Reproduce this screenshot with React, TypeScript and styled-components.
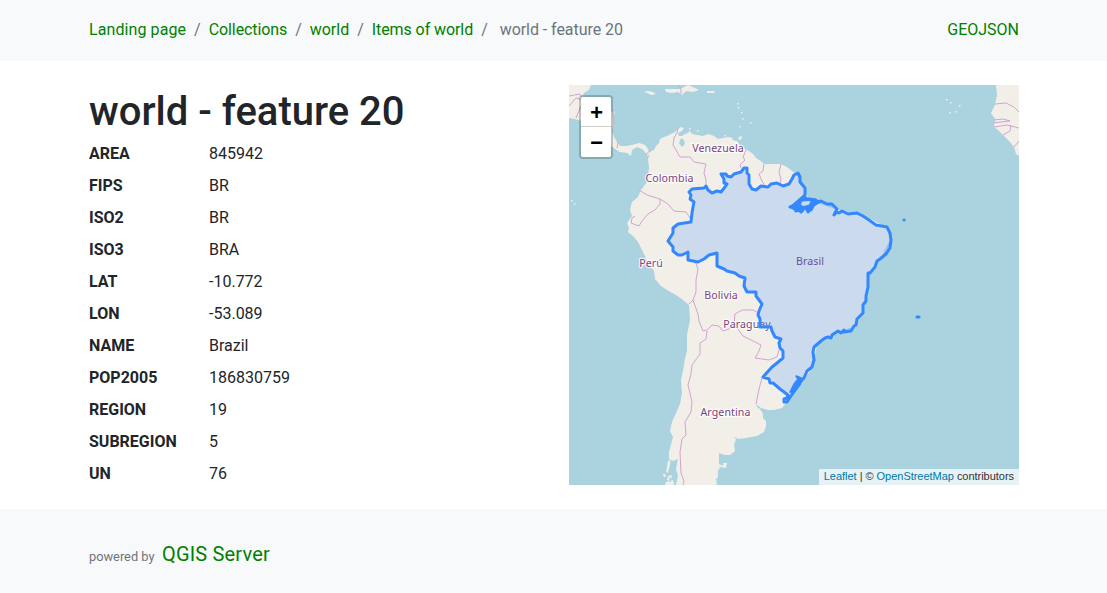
import React from 'react';
import styled, { createGlobalStyle } from 'styled-components';

const GlobalStyle = createGlobalStyle`
  *, *::before, *::after { box-sizing: border-box; }
  body {
    margin: 0;
    font-family: Roboto, "Liberation Sans", sans-serif;
    font-size: 16px;
    line-height: 24px;
    color: #212529;
    background: #fff;
  }
`;

const Page = styled.div`
  display: flex;
  flex-direction: column;
  min-height: 593px;
`;

const Container = styled.div`
  width: 961px;
  margin: 0 auto;
  padding: 0 15px 0 16px;
`;

const Header = styled.nav`
  height: 61px;
  padding-top: 18px;
  background: #f8f9fa;
`;

const HeaderRow = styled(Container)`
  display: flex;
  justify-content: space-between;
`;

const Link = styled.a`
  color: #008000;
  text-decoration: none;
`;

const Breadcrumb = styled.ol`
  display: flex;
  margin: 0;
  padding: 0;
  list-style: none;
`;

const Crumb = styled.li<{ $tracking?: number }>`
  color: #6c757d;
  letter-spacing: ${(p) => p.$tracking ?? 0}px;

  &:not(:first-child)::before {
    content: '/';
    padding: 0 8px;
    letter-spacing: 0;
  }
  &:last-child::before {
    padding-right: 12px;
  }
`;

const Main = styled(Container)`
  display: grid;
  grid-template-columns: 480px 450px;
  height: 448px;
  padding-top: 24px;
`;

const Title = styled.h1`
  margin: 3px 0 2px;
  font-size: 40px;
  line-height: 48px;
  font-weight: 500;
`;

const Attributes = styled.dl`
  display: grid;
  grid-template-columns: 120px 1fr;
  grid-auto-rows: 32px;
  align-items: center;
  margin: 0;
`;

const Name = styled.dt`
  font-weight: 700;
`;

const Value = styled.dd`
  margin: 0;
`;

const MapPane = styled.div`
  position: relative;
  width: 450px;
  height: 400px;
  overflow: hidden;
  background: #aad3df;
`;

const MapDrawing = styled.svg`
  display: block;
`;

const ZoomControl = styled.div`
  position: absolute;
  top: 10px;
  left: 10px;
  border: 2px solid rgba(0, 0, 0, 0.2);
  border-radius: 4px;
  background-clip: padding-box;
`;

const ZoomButton = styled.button`
  display: block;
  width: 30px;
  height: 30px;
  padding: 6px 0 0 1px;
  border: 0;
  background: #fff;
  color: #000;
  font: bold 22px/24px "Liberation Mono", monospace;
  text-align: center;

  &:first-child {
    padding-top: 7px;
    line-height: 22px;
    border-bottom: 1px solid #ccc;
    border-radius: 2px 2px 0 0;
  }
  &:last-child {
    border-radius: 0 0 2px 2px;
  }
`;

const Attribution = styled.div`
  position: absolute;
  right: 0;
  bottom: 0;
  padding: 0 5px 2px;
  background: rgba(255, 255, 255, 0.7);
  color: #333;
  font: 11px/14px "Liberation Sans", Arial, sans-serif;
  letter-spacing: -0.03px;

  a { color: #0078a8; }
`;

const Footer = styled.footer`
  flex: 1;
  padding-top: 30px;
  background: #f8f9fa;
`;

const FooterRow = styled(Container)`
  display: flex;
  align-items: baseline;
  gap: 7.5px;
  line-height: 30px;
`;

const Powered = styled.span`
  font-size: 12.8px;
  color: #6c757d;
`;

const Product = styled(Link)`
  font-size: 20px;
  letter-spacing: 0.17px;
`;

const crumbs: [string, number][] = [
  ['Landing page', 0.09],
  ['Collections', -0.1],
  ['world', -0.02],
  ['Items of world', -0.08],
];

const attributes: [string, string][] = [
  ['AREA', '845942'],
  ['FIPS', 'BR'],
  ['ISO2', 'BR'],
  ['ISO3', 'BRA'],
  ['LAT', '-10.772'],
  ['LON', '-53.089'],
  ['NAME', 'Brazil'],
  ['POP2005', '186830759'],
  ['REGION', '19'],
  ['SUBREGION', '5'],
  ['UN', '76'],
];

const land = [
  // South America
  'M81 68L82 66L85 65L87 61L90 58L91 54L95 52L98 51L102 49L106 47L109 44L112 42L115 43L113 46L109 48L110 51L113 51L116 49L119 48L121 46L123 49L128 50L134 51L139 49L145 51L149 54L154 53L159 52L164 53L163 55L168 56L171 60L174 63L180 66L184 69L187 73L193 77L195 79L205 79L212 79L218 82L223 86L228 90L234 102L240 115L266 124L300 133L318 143L321 155L311 174L299 190L298 215L287 241L268 247L248 260L243 283L230 302L217 318L213 323L205 325L199 325L192 323L187 319L188 322L191 324L194 329L194 333L197 336L197 341L195 347L188 351L177 353L169 354L164 351L167 354L165 360L166 366L161 370L156 370L150 368L150 379L154 381L154 378L158 378L157 383L151 382L149 386L149 392L147 394L148 400L107 400L109 391L107 384L109 374L104 376L100 374L100 367L104 352L101 346L103 337L107 328L111 319L113 308L112 295L114 286L116 274L118 266L118 250L121 235L120 220L114 215L107 210L98 205L92 201L86 194L85 186L79 178L75 169L69 157L65 152L59 147L60 143L58 138L63 131L61 125L63 117L69 112L72 105L78 97L79 90L80 83L79 74Z',
  // Central America
  'M0 0L22 0L20 5L16 7L13 11L20 21L35 24L44 27L46 26L45 31L44 39L43 46L45 52L48 57L51 61L57 61L63 60L70 58L76 60L79 64L81 68L79 71L76 67L73 64L68 62L63 65L62 71L58 68L51 67L46 64L38 58L24 44L10 35L0 33Z',
  // West Africa
  'M427 0L450 0L450 71L447 69L445 62L441 57L434 50L429 45L425 42L426 34L422 28L426 20L428 10Z',
  // Caribbean and Chilean islands
  'M75 7L79 6L84 7L87 9L82 10L78 8Z M96 4L104 4L111 4L119 0L126 3L130 5L124 7L117 6L113 10L109 7L103 8L97 7Z M138 6L146 6L145 8L138 8Z M170 52L173 51L172 55L169 54Z M99 376L102 375L99 388L97 387Z M99 391L103 390L102 396L98 395Z M94 389L96 389L97 392L95 392Z M97 397L104 395L105 400L96 400Z',
];

const lakes =
  'M112 53L115 55L116 59L113 62L110 58Z M102 375L105 378L103 382L101 378Z M100 392L103 394L101 398Z';

const isles = [
  [120, 43], [128, 45], [155, 50], [168, 18], [169, 22], [172, 27], [173, 33], [170, 41],
  [181, 37], [377, 14], [381, 17], [390, 20], [386, 26], [380, 27], [2, 115], [5, 118],
];

const frontiers =
  'M109 43L108 48L105 53L104 60L107 65L111 72L121 72L125 77L137 79L135 88L137 95L137 102' +
  'M70 105L78 110L91 114L99 119L105 126L117 127L121 133M91 114L91 119L86 125L79 129L73 136L70 141L62 138L63 133L66 131' +
  'M177 65L174 72L176 75L171 80L172 83M195 79L194 86L190 89L193 96L196 101M212 79L210 87L212 94L211 99' +
  'M49 57L48 63M81 65L77 70M126 176L129 184L127 195L127 207L124 215L120 219M124 215L129 229L130 236L134 246L138 245L143 240L150 241L154 246L160 244L166 239' +
  'M138 246L137 254L131 258L131 269L123 280L122 289L119 300L123 317L122 327L116 337L117 350L113 354L111 367L112 388L115 396L114 400' +
  'M191 229L184 225L173 225L166 229L165 239L174 251L184 256L192 260L190 266L186 273L200 275L208 272L210 265' +
  'M193 293L190 304L187 319M0 11L11 9L14 15L7 13L0 21M12 21L7 33M44 25L45 39' +
  'M426 19L437 18L445 22L450 27M425 35L434 34L441 36L432 37L424 38M425 42L438 40L450 43M434 50L441 46L442 40M445 62L450 56M109 0L112 4L112 9';

const brazil =
  'M122 137L123 128L124 122L125 117L121 114L122 110L120 107L123 104L135 103L137 101L139 105L143 108L148 106L152 107L156 102L158 99L155 98L155 94L152 89L157 89L158 91L162 92L165 89L172 87L175 83L178 83L178 88L180 90L180 99L183 104L187 105L192 101L199 102L202 99L208 98L214 101L220 99L223 94L225 90L229 88L231 92L231 97L236 103L236 110L234 114L230 116L227 120L221 122L229 123L227 126L232 122L232 127L237 121L239 127L242 121L246 118L252 116L258 119L263 119L265 121L268 124L265 130L268 127L270 128L273 126L279 129L288 128L294 131L300 135L307 140L318 142L321 148L322 155L321 163L317 169L311 174L308 176L306 182L301 188L299 188L299 202L297 211L297 216L294 220L294 228L288 234L287 240L285 241L282 246L275 247L275 245L272 248L269 246L263 250L262 253L259 252L256 253L252 256L245 262L244 267L245 275L243 282L238 286L235 293L231 297L227 304L222 311L218 317L215 317L215 314L218 313L219 310L211 304L204 298L201 298L200 294L194 292L203 282L208 278L214 273L214 266L211 263L210 258L212 254L206 252L203 246L202 242L191 242L191 234L189 230L190 226L193 219L187 211L187 207L178 207L175 201L176 193L170 191L166 188L158 186L155 184L148 181L148 168L140 170L135 174L129 177L119 175L119 167L113 170L109 170L104 166L104 162L99 156L104 148L104 143L109 139Z';

const labels: [string, number, number][] = [
  ['Venezuela', 149, 67],
  ['Colombia', 100.5, 97],
  ['Perú', 82, 182],
  ['Brasil', 241, 179.5],
  ['Bolivia', 152, 213.5],
  ['Paraguay', 178, 243],
  ['Argentina', 156.5, 331],
];

function CountryMap() {
  return (
    <MapDrawing width="450" height="400" viewBox="0 0 450 400" role="img" aria-label="Brazil">
      <g fill="#f2efe9">
        {land.map((d) => <path key={d} d={d} />)}
        {isles.map(([x, y]) => <rect key={`${x}-${y}`} x={x} y={y} width="1.5" height="1.5" />)}
      </g>
      <path d={lakes} fill="#aad3df" />
      <path d={frontiers} fill="none" stroke="#d2a4cf" strokeWidth="1" />
      <g
        fill="#7a427f"
        stroke="#fff"
        strokeOpacity="0.8"
        strokeWidth="2.5"
        strokeLinejoin="round"
        paintOrder="stroke"
        fontFamily='"Noto Sans", sans-serif'
        fontSize="10.6"
        textAnchor="middle"
        letterSpacing="0.1"
      >
        {labels.map(([name, x, y]) => (
          <text key={name} x={x} y={y} strokeWidth={name === 'Brasil' ? 0 : undefined}>{name}</text>
        ))}
      </g>
      <g fill="#3388ff" fillOpacity="0.2" stroke="#3388ff" strokeWidth="3" strokeLinejoin="round" strokeLinecap="round">
        <path d={brazil} />
        <path d="M335 135L335.1 135M348 232L350 232" />
      </g>
      {/* Amazon delta and Lagoa dos Patos */}
      <g fill="#3388ff" stroke="#3388ff" strokeWidth="1.5" strokeLinejoin="round">
        <path d="M235 110L238 113L246 114L251 117L245 121L243 125L239 127L236 123L233 127L227 126L221 122L228 116Z" />
        <path d="M227 291L230 292L234 294L231 300L224 308L221 307L225 299L229 294Z" />
      </g>
      <path d="M233 116.5L241.5 116L240 119.5L235 121L232 120Z" fill="#ccdaee" />
    </MapDrawing>
  );
}

export default function App() {
  return (
    <Page>
      <GlobalStyle />
      <Header>
        <HeaderRow>
          <Breadcrumb>
            {crumbs.map(([name, tracking]) => (
              <Crumb key={name} $tracking={tracking}><Link>{name}</Link></Crumb>
            ))}
            <Crumb $tracking={-0.06}>world - feature 20</Crumb>
          </Breadcrumb>
          <Link>GEOJSON</Link>
        </HeaderRow>
      </Header>
      <Main as="main">
        <section>
          <Title>world - feature 20</Title>
          <Attributes>
            {attributes.map(([name, value]) => (
              <React.Fragment key={name}>
                <Name>{name}</Name>
                <Value>{value}</Value>
              </React.Fragment>
            ))}
          </Attributes>
        </section>
        <MapPane>
          <CountryMap />
          <ZoomControl>
            <ZoomButton>+</ZoomButton>
            <ZoomButton>−</ZoomButton>
          </ZoomControl>
          <Attribution>
            <a>Leaflet</a> | © <a>OpenStreetMap</a> contributors
          </Attribution>
        </MapPane>
      </Main>
      <Footer>
        <FooterRow>
          <Powered>powered by</Powered>
          <Product>QGIS Server</Product>
        </FooterRow>
      </Footer>
    </Page>
  );
}
